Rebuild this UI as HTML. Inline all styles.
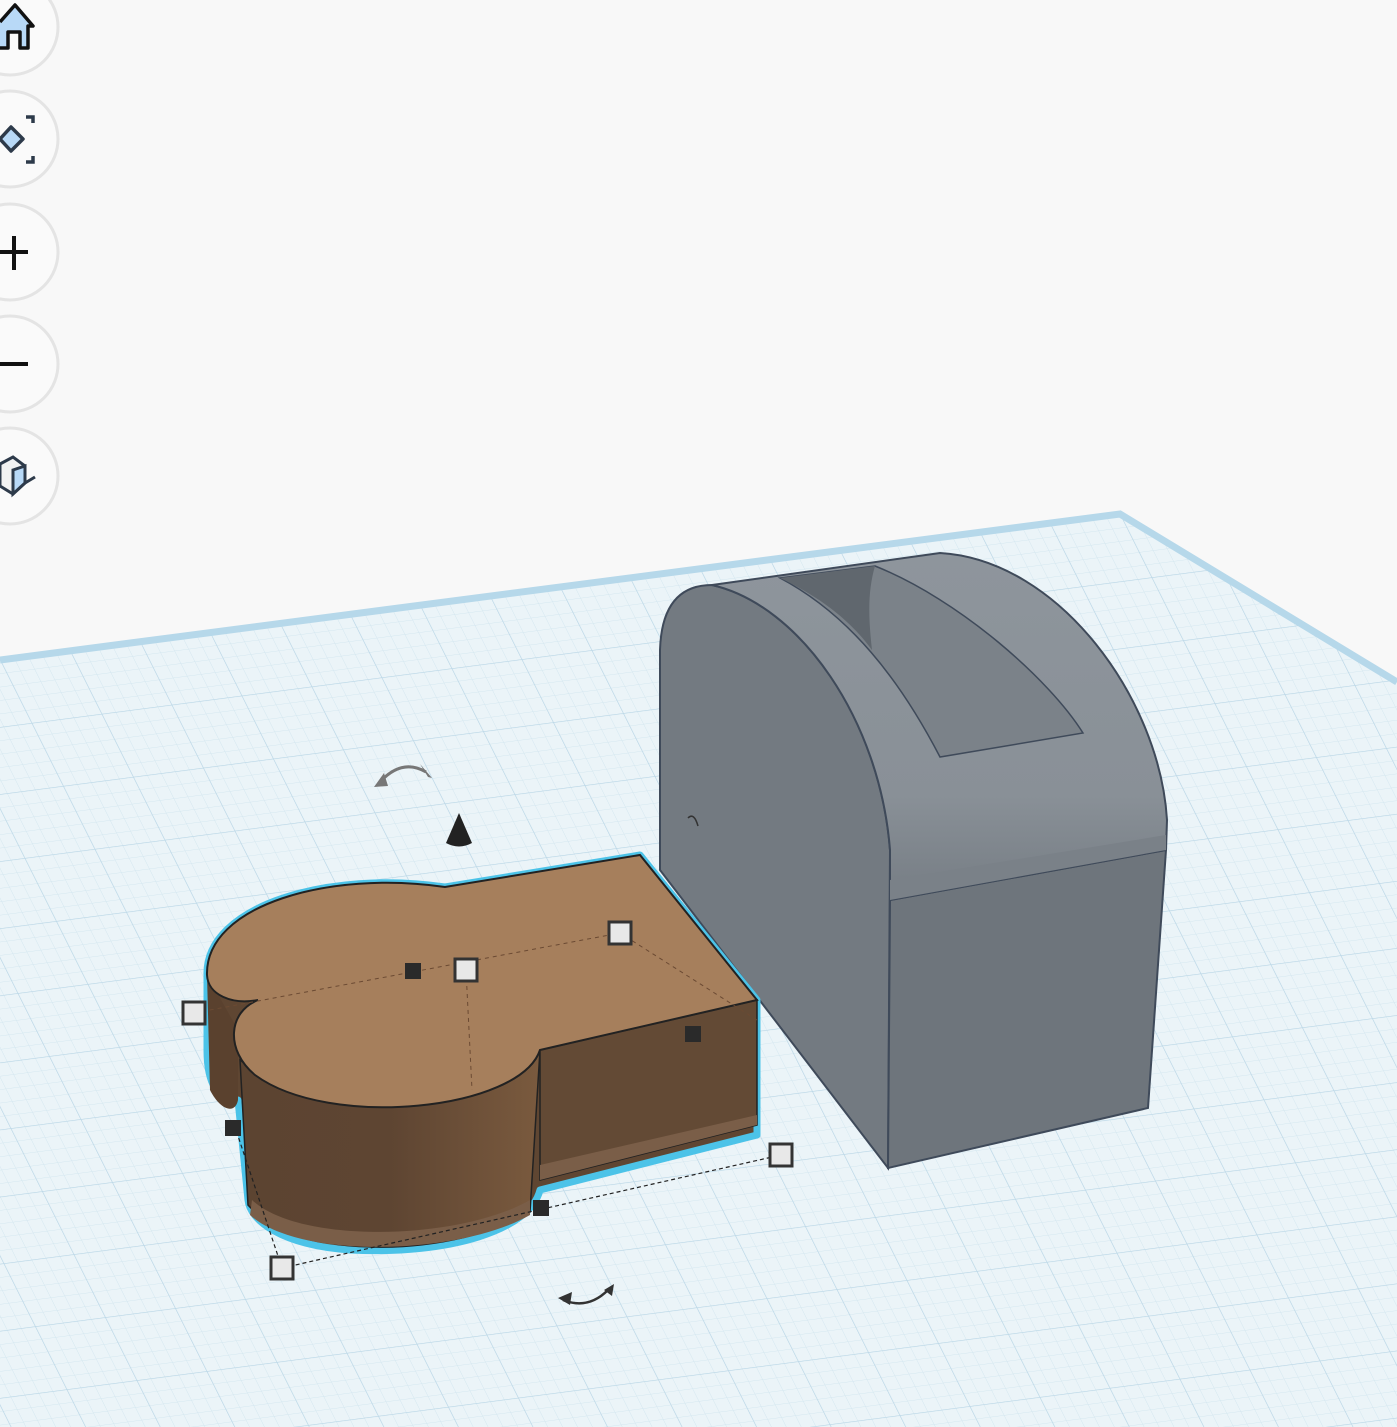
<!DOCTYPE html>
<html><head><meta charset="utf-8"><style>
html,body{margin:0;padding:0;background:#f8f8f8;width:1397px;height:1427px;overflow:hidden}
svg{display:block}
</style></head><body>
<svg width="1397" height="1427" viewBox="0 0 1397 1427" xmlns="http://www.w3.org/2000/svg">
<defs>
<pattern id="minor" width="14" height="14" patternUnits="userSpaceOnUse" patternTransform="matrix(1,-0.13,0.45,0.9,0,660)">
<path d="M0 0H14M0 0V14" stroke="#d3e6ef" stroke-width="1" fill="none"/>
</pattern>
<pattern id="major" width="70" height="70" patternUnits="userSpaceOnUse" patternTransform="matrix(1,-0.13,0.45,0.9,0,660)">
<path d="M0 0H70M0 0V70" stroke="#b9d6e6" stroke-width="1.3" fill="none"/>
</pattern>
<linearGradient id="lobe" x1="0" x2="1" y1="0" y2="0">
<stop offset="0" stop-color="#5c4431"/><stop offset="0.5" stop-color="#5e4532"/><stop offset="1" stop-color="#7a5a3e"/>
</linearGradient>
<linearGradient id="band" x1="0" x2="0" y1="0" y2="1">
<stop offset="0" stop-color="#8e959c"/><stop offset="0.7" stop-color="#899097"/><stop offset="1" stop-color="#767d84"/>
</linearGradient>
</defs>
<polygon points="0,658 1120,512 1397,680 1397,1427 0,1427" fill="#ebf4f8"/>
<polygon points="0,658 1120,512 1397,680 1397,1427 0,1427" fill="url(#minor)"/>
<polygon points="0,658 1120,512 1397,680 1397,1427 0,1427" fill="url(#major)"/>
<polyline points="0,660 1120,514 1397,682" fill="none" stroke="#b6d8ea" stroke-width="7"/>

<path d="M660,870 L660,650 Q662,585 712,585 C800,605 880,720 890,850 L888,1168 Z" fill="#737a81" stroke="#3f4a5a" stroke-width="2"/>
<path d="M890,900 L1166,850 L1148,1108 L888,1168 Z" fill="#6e757c" stroke="#3f4a5a" stroke-width="2"/>
<path d="M712,585 L940,553 C1060,560 1160,700 1167,820 L1166,850 L890,900 L890,850 C880,720 800,605 712,585 Z" fill="url(#band)" stroke="#3f4a5a" stroke-width="2"/>
<path d="M890,880 L1166,835 L1166,850 L890,900 Z" fill="#7a8188"/>
<path d="M780,578 L875,566 C960,600 1050,680 1083,733 L940,757 C900,680 850,615 780,578 Z" fill="#7b8289" stroke="#3f4a5a" stroke-width="1.5"/>
<path d="M780,578 L875,566 C868,590 868,615 872,650 C850,620 820,597 780,578 Z" fill="#60676e"/>
<path d="M688,818 q6,-6 10,8" fill="none" stroke="#333" stroke-width="1.5"/>

<path d="M207,975 C205,905 330,870 445,887 L640,855 L757,1000 L757,1135 L540,1190 C530,1230 450,1255 350,1250 C280,1245 250,1220 248,1200 L238,1100 C215,1100 207,1080 207,1050 Z" fill="#5f4632" stroke="#4cc3e8" stroke-width="7" stroke-linejoin="round"/>
<path d="M207,975 L210,1090 C220,1110 235,1115 238,1100 L238,1030 Z" fill="#5a412e"/>
<path d="M240,1060 L248,1205 C300,1265 460,1255 530,1212 L540,1050 C520,1110 330,1130 240,1060 Z" fill="url(#lobe)" stroke="#222" stroke-width="1.5"/>
<path d="M252,1200 C300,1245 460,1240 530,1200 L530,1215 C460,1255 300,1260 250,1215 Z" fill="#7a5e48"/>
<path d="M540,1050 L757,1000 L757,1125 L540,1180 Z" fill="#634a35" stroke="#222" stroke-width="1.5"/>
<path d="M540,1165 L757,1115 L757,1125 L540,1180 Z" fill="#7a5e48"/>
<path d="M207,975 C205,905 330,870 445,887 L640,855 L757,1000 L540,1050 C520,1110 330,1130 255,1075 C225,1050 228,1012 258,1000 C232,1005 208,995 207,975 Z" fill="#a67f5c" stroke="#222" stroke-width="2"/>
<g stroke="#6b4a33" stroke-width="1" stroke-dasharray="4,4" fill="none">
<path d="M194,1013 L620,933 L757,1020"/>
<path d="M466,970 L472,1090"/>
</g>
<g stroke="#222" stroke-width="1.2" stroke-dasharray="4,3" fill="none">
<path d="M282,1268 L781,1155"/><path d="M282,1268 L236,1130"/>
</g>
<g fill="#e8e8e8" stroke="#333" stroke-width="3">
<rect x="183" y="1002" width="22" height="22"/><rect x="455" y="959" width="22" height="22"/>
<rect x="609" y="922" width="22" height="22"/><rect x="770" y="1144" width="22" height="22"/>
<rect x="271" y="1257" width="22" height="22"/>
</g>
<g fill="#2a2a2a">
<rect x="405" y="963" width="16" height="16"/><rect x="685" y="1026" width="16" height="16"/>
<rect x="225" y="1120" width="16" height="16"/><rect x="533" y="1200" width="16" height="16"/>
</g>
<path d="M459,813 L446,843 Q459,850 472,843 Z" fill="#222"/>
<path d="M380,782 Q402,758 426,772" fill="none" stroke="#777" stroke-width="3"/>
<path d="M374,787 L384,773 L388,786 Z M432,778 L420,764 L428,777 Z" fill="#777"/>
<path d="M563,1300 Q588,1310 608,1290" fill="none" stroke="#333" stroke-width="2.5"/>
<path d="M558,1298 L572,1292 L570,1305 Z M614,1284 L604,1290 L612,1296 Z" fill="#333"/>

<g fill="#fafafa" stroke="#e4e4e4" stroke-width="3">
<circle cx="10" cy="27" r="48"/><circle cx="10" cy="139" r="48"/><circle cx="10" cy="252" r="48"/>
<circle cx="10" cy="364" r="48"/><circle cx="10" cy="476" r="48"/>
</g>
<path d="M0,22 L15,5 L33,26 L28,26 L28,48 L20,48 L20,32 L8,32 L8,48 L0,48" fill="#b8d9f7" stroke="#111" stroke-width="3.5" stroke-linejoin="round"/>
<path d="M0,139 L11,127 L23,139 L11,151 Z" fill="#b8d9f7" stroke="#2d3a4a" stroke-width="3.5" stroke-linejoin="round"/>
<path d="M26,117 L33,117 L33,123 M26,162 L33,162 L33,156" fill="none" stroke="#2d3a4a" stroke-width="3.5"/>
<path d="M0,252 H28 M14,236 V270" stroke="#111" stroke-width="4"/>
<path d="M0,364 H28" stroke="#111" stroke-width="4"/>
<path d="M0,464 L13,457 L25,466 L25,483 L13,494 L0,486 Z" fill="#f2f2f2" stroke="#2d3a4a" stroke-width="3"/>
<path d="M13,470 L25,466 L25,483 L13,494 Z" fill="#b8d9f7" stroke="#2d3a4a" stroke-width="3"/>
<path d="M25,483 L35,477" stroke="#2d3a4a" stroke-width="3"/>
</svg>
</body></html>
